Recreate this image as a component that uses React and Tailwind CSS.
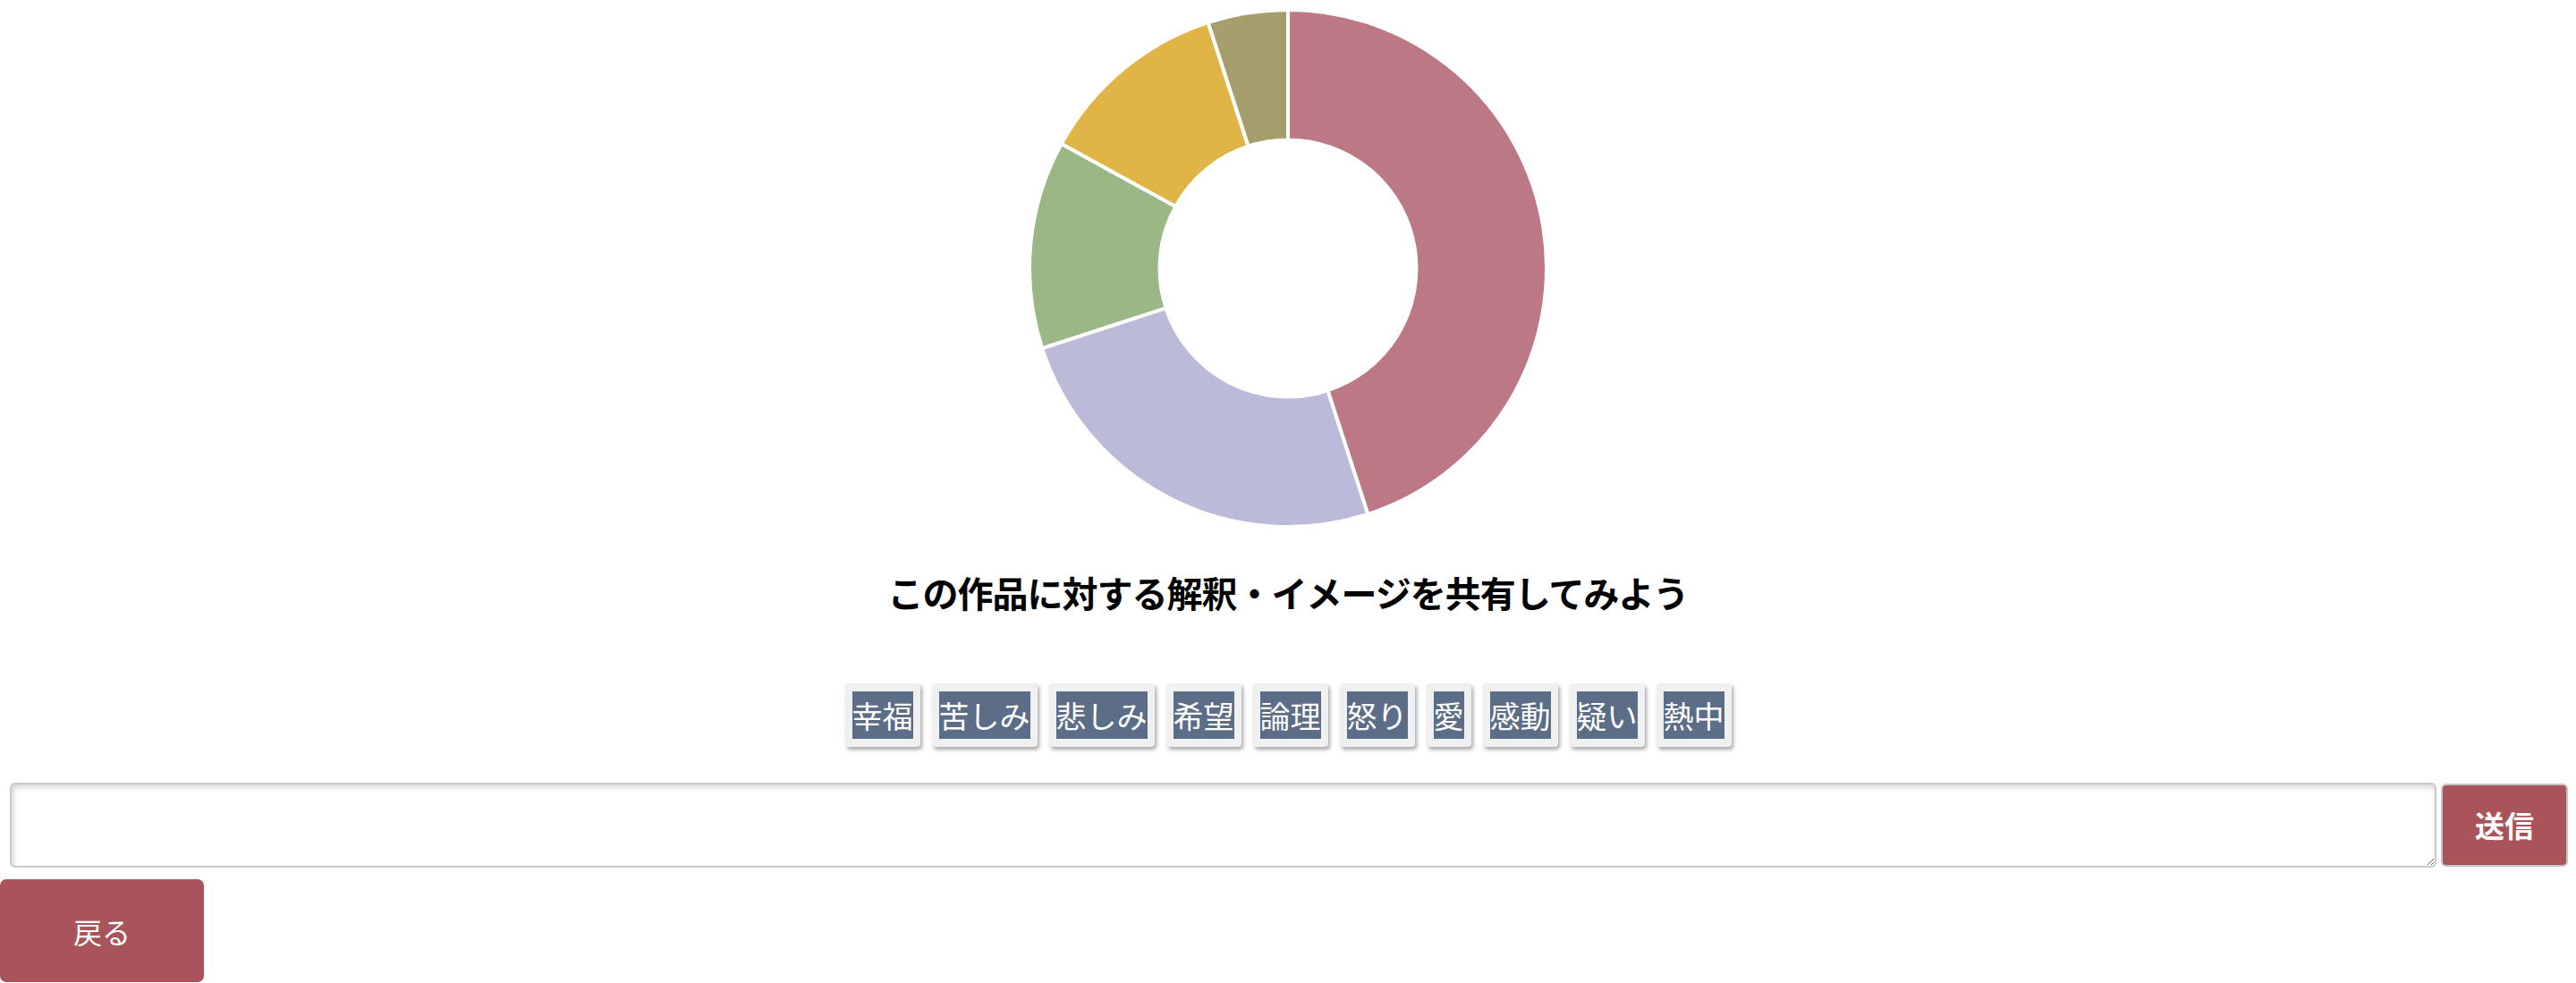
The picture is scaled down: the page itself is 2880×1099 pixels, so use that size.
import { useState } from "react";

const slices = [
  { label: "幸福", value: 45, color: "#bd7886" },
  { label: "苦しみ", value: 25, color: "#bbbbd9" },
  { label: "悲しみ", value: 13, color: "#9bb786" },
  { label: "希望", value: 12, color: "#e0b445" },
  { label: "論理", value: 5, color: "#a59f6d" },
];

const tags = ["幸福", "苦しみ", "悲しみ", "希望", "論理", "怒り", "愛", "感動", "疑い", "熱中"];

const jp = { fontFamily: '"Noto Sans CJK JP", "Noto Sans", sans-serif' };

function point(r, deg) {
  const rad = ((deg - 90) * Math.PI) / 180;
  return [300 + r * Math.cos(rad), 300 + r * Math.sin(rad)];
}

function arcPath(a0, a1, R, r) {
  const large = a1 - a0 > 180 ? 1 : 0;
  const [x0, y0] = point(R, a0);
  const [x1, y1] = point(R, a1);
  const [x2, y2] = point(r, a1);
  const [x3, y3] = point(r, a0);
  return `M${x0} ${y0} A${R} ${R} 0 ${large} 1 ${x1} ${y1} L${x2} ${y2} A${r} ${r} 0 ${large} 0 ${x3} ${y3} Z`;
}

function Doughnut() {
  const total = slices.reduce((s, x) => s + x.value, 0);
  let start = 0;
  return (
    <svg width="600" height="600" viewBox="0 0 600 600">
      {slices.map((s) => {
        const end = start + (s.value / total) * 360;
        const d = arcPath(start, end, 289, 143.5);
        start = end;
        return <path key={s.label} d={d} fill={s.color} stroke="#fff" strokeWidth="4" strokeLinejoin="round" />;
      })}
    </svg>
  );
}

export default function App() {
  const [text, setText] = useState("");

  return (
    <div className="bg-white h-[1099px] overflow-hidden" style={jp}>
      <div className="flex justify-center h-[600px]">
        <Doughnut />
      </div>

      <h2 className="mt-[32px] text-center text-[40px] leading-[60px] font-bold text-black tracking-[-1px]">
        この作品に対する解釈・イメージを共有してみよう
      </h2>

      <div className="mt-[72px] flex justify-center gap-[13px]">
        {tags.map((t) => (
          <button
            key={t}
            onClick={() => setText(text + t)}
            className="bg-[#eef0f2] rounded-[4px] px-[8px] py-[9px] shadow-[2px_3px_4px_rgba(0,0,0,0.35)]"
          >
            <span className="block bg-[#5b6d87] text-white text-[34px] leading-[53px] font-normal">{t}</span>
          </button>
        ))}
      </div>

      <div className="mt-[40px] flex items-center pl-[11px] pr-[9px] gap-[5px]">
        <textarea
          value={text}
          onChange={(e) => setText(e.target.value)}
          className="flex-1 h-[95px] border-2 border-[#c9c9c9] rounded-[6px] shadow-[inset_2px_3px_6px_rgba(0,0,0,0.18)] outline-none p-2 text-[28px]"
        />
        <button className="w-[142px] h-[93px] bg-[#a9535b] border-2 border-[#c4c4c4] rounded-[6px] text-white text-[33px] font-bold">
          送信
        </button>
      </div>

      <button className="mt-[13px] block w-[228px] h-[115px] bg-[#a9535b] rounded-[7px] text-white text-[32px]">
        戻る
      </button>
    </div>
  );
}
